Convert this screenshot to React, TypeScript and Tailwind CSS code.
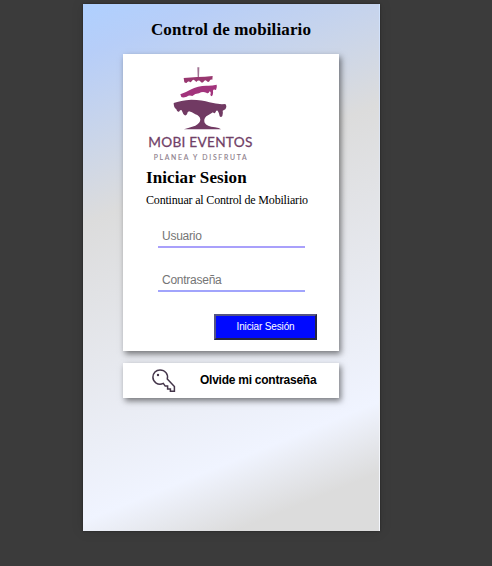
import React from "react";

function Logo() {
  return (
    <svg className="block h-[105px] w-[120px]" viewBox="0 0 360 315" role="img" aria-label="Mobi Eventos">
      <path d="M172 22 L178 22 L177 51 L173 51 Z" fill="#8a5078" opacity="0.8" />
      <path d="M131 54 Q152 53 172 51 Q195 51 218 48 L217 59 Q212 57 210 61 Q206 70 200 63 Q195 58 190 66 Q186 70 182 65 Q176 58 169 66 Q165 62 162 60 Q158 58 155 64 Q151 70 147 64 L142 66 Q140 71 133 67 Z" fill="#98376f" />
      <path d="M121 103 Q135 98 151 89 Q174 77 199 77 Q214 78 230 74 Q232 82 228 90 Q220 86 219 92 Q220 98 218 105 Q215 112 211 105 Q214 96 209 94 Q205 103 199 98 Q187 93 177 100 Q165 100 157 108 Q148 104 140 110 Q129 114 124 111 Z" fill="#a2347c" />
      <path d="M101 129 Q121 121 154 119 Q188 119 208 127 Q233 134 256 132 Q262 139 256 148 L248 152 Q250 160 247 168 Q243 174 239 169 Q237 157 233 152 Q228 150 227 156 Q223 163 219 157 Q208 164 199 169 Q190 178 194 188 Q200 199 225 202 Q238 204 243 208 L132 208 Q150 202 166 197 Q181 190 181 178 Q179 167 166 163 Q155 156 147 154 Q142 155 141 163 Q136 170 130 162 L125 151 Q121 148 117 155 Q111 157 109 148 Q101 143 101 129 Z" fill="#713a63" />
      <text x="25" y="262" fill="#713f67" stroke="#713f67" strokeWidth="0.8" fontFamily="Lato, sans-serif" fontSize="41" textLength="312" lengthAdjust="spacing">MOBI EVENTOS</text>
      <text x="41" y="299" fill="#8e7e8c" stroke="#8e7e8c" strokeWidth="0.4" fontFamily="Lato, sans-serif" fontSize="20.5" textLength="279" lengthAdjust="spacing">PLANEA Y DISFRUTA</text>
    </svg>
  );
}

function KeyIcon() {
  return (
    <svg className="block h-6 w-6" viewBox="0 0 24 24" fill="none" stroke="#44354a" strokeWidth="1.5">
      <path d="M15.3 10 L22.4 17.6 V22.3 H18.4 V19.9 H15.6 V17.1 H13.2 L11.3 14.4 C6 17 .9 12.8 .9 8.3 C.9 4.2 4 .9 8 .9 C13 .9 16.5 5.2 15.3 10 Z" />
      <circle cx="6" cy="6" r="1.2" fill="#44354a" stroke="none" />
    </svg>
  );
}

const field =
  "block h-6 w-[147px] border-b-2 bg-transparent px-1 pt-0.5 font-['Liberation_Sans',Arial,sans-serif] text-[12px] leading-4 tracking-[-0.25px] outline-none placeholder:text-[#757575]";

export default function App() {
  return (
    <main className="flex h-[566px] w-full justify-center overflow-hidden bg-[#3b3b3b] pt-1 pr-[29px] font-['Liberation_Serif','Times_New_Roman',serif] text-black">
      <section className="flex h-[527px] w-[297px] flex-col items-center border-r border-white/40 bg-[linear-gradient(158deg,#afd0ff_0%,#b7cef8_8%,#dcdcdc_34%,#f0f4ff_80%,#dcdcdc_91%)] shadow-[0_0_2px_rgba(0,0,0,0.4),0_0_12px_rgba(0,0,0,0.12)]">
        <h1 className="mt-4 h-[34px] text-[17px] leading-5 font-bold tracking-[0.13px] whitespace-nowrap">Control de mobiliario</h1>
        <div className="flex h-[297px] w-[216px] flex-col bg-white pt-1.5 shadow-[2px_3px_6px_rgba(0,0,0,0.5)]">
          <div className="ml-[17px]"><Logo /></div>
          <h2 className="mt-[3px] ml-[23px] text-[17px] leading-5 font-bold tracking-[0.1px]">Iniciar Sesion</h2>
          <p className="mt-1 ml-[23px] text-[12px] leading-4 tracking-[-0.18px] whitespace-nowrap">Continuar al Control de Mobiliario</p>
          <form className="mt-4 flex flex-col pl-[35px]" onSubmit={(e) => e.preventDefault()}>
            <input className={`${field} border-[#a9a0fb]`} placeholder="Usuario" />
            <input className={`${field} mt-5 border-[#a1a4fc]`} type="password" placeholder="Contraseña" />
            <button className="mt-[22px] ml-14 h-[26px] w-[103px] border-2 border-t-[#555582] border-r-[#252540] border-b-[#252540] border-l-[#555582] bg-[#0009ff] pb-px font-['Liberation_Sans',Arial,sans-serif] text-[10px] tracking-[-0.15px] text-white">Iniciar Sesión</button>
          </form>
        </div>
        <button className="mt-3 flex h-[35px] w-[216px] items-center bg-white pl-[29px] shadow-[2px_3px_6px_rgba(0,0,0,0.5)]">
          <KeyIcon />
          <span className="ml-6 pb-px font-['Liberation_Sans',Arial,sans-serif] text-[12px] font-bold tracking-[-0.25px] whitespace-nowrap">Olvide mi contraseña</span>
        </button>
      </section>
    </main>
  );
}
